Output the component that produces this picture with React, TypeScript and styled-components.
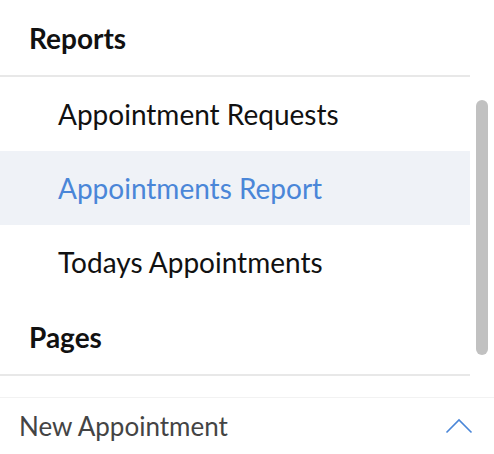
import React from "react";
import styled, { createGlobalStyle } from "styled-components";

const GlobalStyle = createGlobalStyle`
  html, body {
    margin: 0;
    padding: 0;
    background: #ffffff;
  }
  body {
    font-family: Lato, "Noto Sans", Arial, sans-serif;
  }
`;

const Page = styled.div`
  width: 494px;
  height: 454px;
  display: flex;
  flex-direction: column;
  overflow: hidden;
`;

const ScrollArea = styled.div`
  display: flex;
  height: 397px;
  border-bottom: 1px solid #f2f2f2;
`;

const List = styled.div`
  width: 470px;
  display: flex;
  flex-direction: column;
`;

const Track = styled.div`
  flex: 1;
  padding: 100px 6px 0 6px;
`;

const Thumb = styled.div`
  width: 12px;
  height: 255px;
  border-radius: 6px;
  background: #c1c1c1;
`;

const SectionTitle = styled.div`
  height: 75px;
  display: flex;
  align-items: center;
  padding-left: 29px;
  font-size: 28px;
  font-weight: 700;
  color: #111;
  border-bottom: 2px solid #e8e8e8;
`;

const Item = styled.div<{ $active?: boolean }>`
  height: 74px;
  display: flex;
  align-items: center;
  padding-left: 58px;
  font-size: 28px;
  color: ${(p) => (p.$active ? "#4a86d8" : "#111")};
  background: ${(p) => (p.$active ? "#eff2f7" : "transparent")};
`;

const Footer = styled.div`
  flex: 1;
  display: flex;
  align-items: center;
  justify-content: space-between;
  padding: 0 21px 0 19px;
  font-size: 26px;
  color: #444;
`;

const Chevron = () => (
  <svg width="28" height="16" viewBox="0 0 28 16">
    <polyline
      points="1.5,14.5 14,2 26.5,14.5"
      fill="none"
      stroke="#4a86d8"
      strokeWidth="1.6"
    />
  </svg>
);

const reports = ["Appointment Requests", "Appointments Report", "Todays Appointments"];

export default function App() {
  return (
    <Page>
      <GlobalStyle />
      <ScrollArea>
        <List>
          <SectionTitle>Reports</SectionTitle>
          {reports.map((r) => (
            <Item key={r} $active={r === "Appointments Report"}>
              {r}
            </Item>
          ))}
          <SectionTitle>Pages</SectionTitle>
        </List>
        <Track>
          <Thumb />
        </Track>
      </ScrollArea>
      <Footer>
        <span>New Appointment</span>
        <Chevron />
      </Footer>
    </Page>
  );
}
